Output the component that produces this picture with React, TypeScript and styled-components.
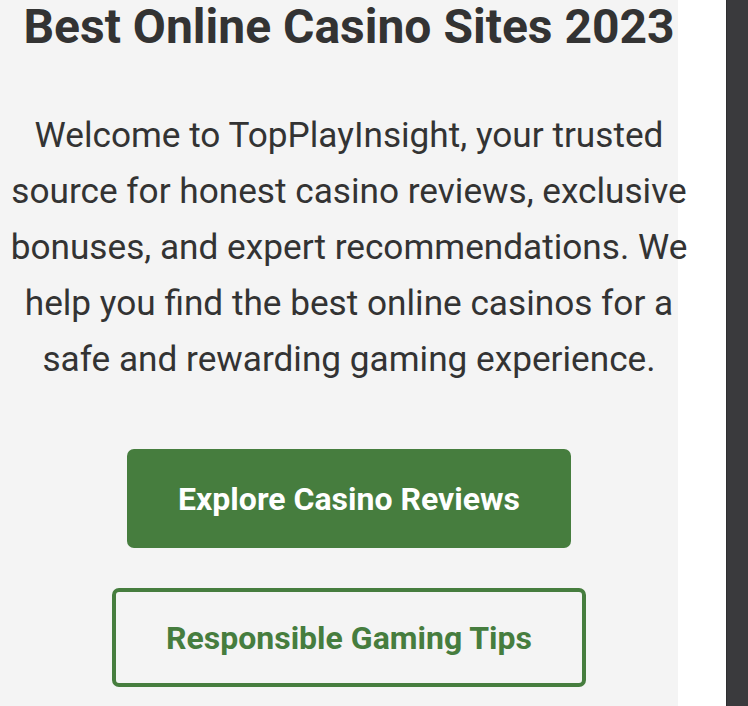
import React from "react";
import styled, { createGlobalStyle } from "styled-components";

const Global = createGlobalStyle`
  html, body { margin: 0; padding: 0; background: #ffffff; }
  body { font-family: Roboto, "Liberation Sans", sans-serif; overflow: hidden; }
`;

const Page = styled.div`
  display: flex;
  width: 748px;
  height: 706px;
  overflow: hidden;
`;

const Main = styled.main`
  width: 678px;
  flex: none;
  background: #f4f4f4;
  overflow: visible;
  position: relative;
  z-index: 1;
`;

const Content = styled.section`
  width: 698px;
  display: flex;
  flex-direction: column;
  align-items: center;
  text-align: center;
  color: #333333;
`;

const Title = styled.h1`
  margin: 0;
  font-size: 48px;
  line-height: 54px;
  font-weight: 700;
  color: #333333;
`;

const Lead = styled.p`
  margin: 53px 0 0;
  font-size: 35.2px;
  line-height: 56px;
  font-weight: 400;
  color: #333333;
`;

const Buttons = styled.div`
  display: flex;
  flex-direction: column;
  align-items: center;
  gap: 40px;
  margin-top: 62px;
`;

const Button = styled.a<{ $variant: "solid" | "outline" }>`
  display: flex;
  align-items: center;
  justify-content: center;
  box-sizing: border-box;
  height: 99px;
  padding: 0 ${(p) => (p.$variant === "solid" ? "51px" : "50px")};
  border-radius: 7px;
  font-size: 32px;
  font-weight: 700;
  text-decoration: none;
  background: ${(p) => (p.$variant === "solid" ? "#467d3e" : "transparent")};
  color: ${(p) => (p.$variant === "solid" ? "#ffffff" : "#467d3e")};
  border: ${(p) => (p.$variant === "solid" ? "none" : "4px solid #467d3e")};
`;

const Gutter = styled.div`
  width: 48px;
  flex: none;
  background: #ffffff;
`;

const Scrollbar = styled.div`
  flex: 1;
  background: #3a3a3d;
  border-left: 1px solid #2e2e30;
`;

export default function App() {
  return (
    <>
      <Global />
      <Page>
        <Main>
          <Content>
            <Title>Best Online Casino Sites 2023</Title>
            <Lead>
              Welcome to TopPlayInsight, your trusted
              <br />
              source for honest casino reviews, exclusive
              <br />
              bonuses, and expert recommendations. We
              <br />
              help you find the best online casinos for a
              <br />
              safe and rewarding gaming experience.
            </Lead>
            <Buttons>
              <Button $variant="solid" href="#">Explore Casino Reviews</Button>
              <Button $variant="outline" href="#">Responsible Gaming Tips</Button>
            </Buttons>
          </Content>
        </Main>
        <Gutter />
        <Scrollbar />
      </Page>
    </>
  );
}
